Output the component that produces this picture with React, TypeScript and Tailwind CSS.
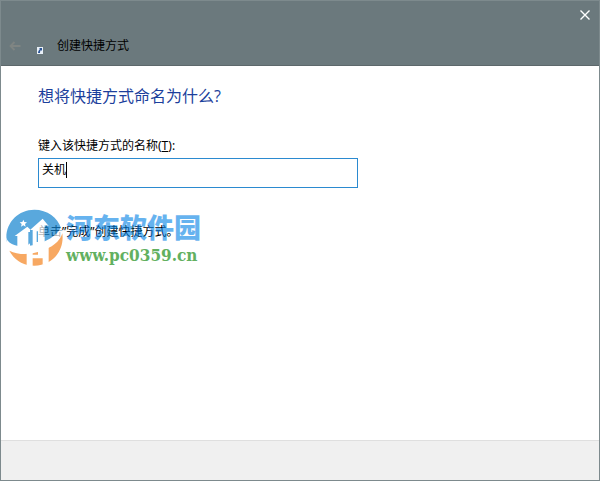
import { useState } from 'react';

export default function App() {
  return (
    <div className="flex h-screen flex-col border border-[#7d8a8d] bg-white font-['Noto_Sans','Noto_Sans_CJK_SC',sans-serif] text-xs text-black">
      <TitleBar />
      <ShortcutForm />
      <footer className="h-10 shrink-0 border-t border-[#dfdfdf] bg-[#f0f0f0]" />
    </div>
  );
}

function TitleBar() {
  return (
    <header className="shrink-0 border-b border-[#5d686b] bg-[#6b797d]">
      <div className="flex h-7 items-center justify-end">
        <button type="button" aria-label="关闭" className="flex h-7 w-7 items-center justify-center">
          <svg viewBox="0 0 10 10" className="h-[10px] w-[10px]" fill="none" stroke="#fff" strokeWidth="1.4">
            <path d="M0.5 0.5L9.5 9.5M9.5 0.5L0.5 9.5" />
          </svg>
        </button>
      </div>
      <div className="flex h-9 items-center px-2 pb-0.5">
        <button type="button" aria-label="后退" disabled className="mr-4">
          <svg viewBox="0 0 12 10" className="h-[10px] w-3" fill="none" stroke="#7f8583" strokeWidth="1.8">
            <path d="M11.5 5H1.5M5.5 1L1.5 5L5.5 9" />
          </svg>
        </button>
        <ShortcutIcon />
        <h1 className="ml-3.5">创建快捷方式</h1>
      </div>
    </header>
  );
}

function ShortcutIcon() {
  return (
    <svg viewBox="0 0 6 7" className="mt-2 h-[7px] w-[6px]">
      <path fill="#e9f0f7" d="M0 0h6v7H0z" />
      <path fill="#2d5597" d="M2 1h3v3L4 3C3 4 3 5 3 6H1C1 4 2 3 3 2z" />
    </svg>
  );
}

function ShortcutForm() {
  const [name, setName] = useState('关机');

  return (
    <main className="relative flex-1 px-[37px] pt-4">
      <h2 className="font-['Open_Sans','Noto_Sans_CJK_SC',sans-serif] text-base leading-7 text-[#1c3f9c]">
        想将快捷方式命名为什么?
      </h2>
      <label htmlFor="shortcut-name" className="mt-7 block leading-4">
        键入该快捷方式的名称(<u>T</u>):
      </label>
      <div className="relative mt-1 w-8/12 max-w-80">
        <input
          id="shortcut-name"
          value={name}
          onChange={(e) => setName(e.target.value)}
          className="block h-[30px] w-full border border-[#2b8ad0] px-[3px] pb-2 outline-none"
        />
        <span className="absolute top-1 left-7 h-4 w-px bg-black" />
      </div>
      <p className="mt-9 leading-4">单击”完成”创建快捷方式。</p>
      <Watermark />
    </main>
  );
}

function Watermark() {
  return (
    <div className="pointer-events-none absolute top-[143px] left-1 flex items-start gap-0.5">
      <SiteLogo />
      <div className="font-bold">
        <div className="font-['Noto_Sans_CJK_SC',sans-serif] text-[27px] leading-9 font-black text-[#0080e5]/60">
          河东软件园
        </div>
        <div className="font-['DejaVu_Serif_Condensed','DejaVu_Serif',serif] text-[17px] leading-5 text-[#62b060]">
          www.pc0359.cn
        </div>
      </div>
    </div>
  );
}

function SiteLogo() {
  return (
    <svg viewBox="9 9 177 171" className="h-[57px] w-[59px] opacity-70">
      <circle cx="97" cy="95" r="84" fill="#fff" />
      {/* sky */}
      <path fill="#1484d0" d="M14 106C7 54 46 11 97 11C136 11 167 34 178 68C168 95 140 113 106 122C72 132 36 132 14 106Z" />
      {/* ground */}
      <path fill="#f58420" d="M181 82C188 136 150 179 97 179C64 179 37 163 22 134C50 148 86 146 116 136C149 125 174 107 181 82Z" />
      <path fill="#fff" d="M64 41l3 7 8 1-6 5 2 8-7-4-7 4 2-8-6-5 8-1z" />
      {/* houses */}
      <path fill="#fff" d="M38 90L76 62L84 70V130H46V90Z" />
      <path fill="#fff" d="M84 72L122 38L140 60L128 58V116L92 128V72Z" />
      <path fill="#1484d0" d="M79 78H84V112L79 116ZM104 76H108V108H104Z" />
      {/* road */}
      <path fill="#fff" d="M11 92C19 118 52 126 92 118C132 109 164 91 177 64C181 94 150 120 112 132C70 145 32 142 18 122Z" />
      <path fill="#fff" d="M74 138H92V180H74ZM108 134L140 122V172L122 177V157H92V146H108Z" />
    </svg>
  );
}
